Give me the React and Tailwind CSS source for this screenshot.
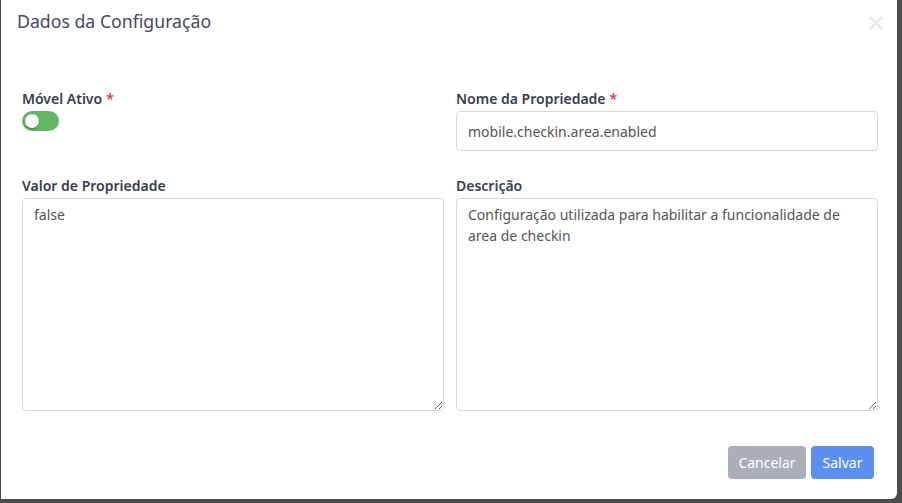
import React, { useState } from "react";

function Toggle() {
  const [on, setOn] = useState(false);
  return (
    <button
      type="button"
      onClick={() => setOn(!on)}
      className="relative w-[37px] h-[20px] rounded-full bg-[#62b762] flex items-center px-[3px]"
    >
      <span
        className={
          "block w-[14px] h-[14px] rounded-full bg-white shadow-[0_1px_2px_rgba(0,0,0,0.35)] transition-transform " +
          (on ? "translate-x-[17px]" : "translate-x-0")
        }
      />
    </button>
  );
}

function Label({ children, required }) {
  return (
    <label className="block h-[20px] leading-[20px] text-[14px] font-semibold text-[#363d50] mb-[2px]">
      {children}
      {required && <span className="text-[#d9383a] ml-[4px]">*</span>}
    </label>
  );
}

export default function App() {
  const [nome, setNome] = useState("mobile.checkin.area.enabled");
  const [valor, setValor] = useState("false");
  const [descricao, setDescricao] = useState(
    "Configuração utilizada para habilitar a funcionalidade de area de checkin"
  );

  return (
    <div
      className="w-[902px] h-[503px] overflow-hidden bg-[#4b4b4b]"
      style={{ fontFamily: '"Noto Sans", "Open Sans", sans-serif' }}
    >
      <div className="ml-[1px] w-[896px] h-[499px] bg-white rounded-br-[6px] flex flex-col">
        <div className="flex items-start justify-between pl-[16px] pr-[13px] pt-[9px]">
          <h4 className="text-[17.7px] leading-[24px] text-[#46476a]">
            Dados da Configuração
          </h4>
          <button className="mt-[6px] text-[#e3e3e3]">
            <svg width="16" height="16" viewBox="0 0 16 16" fill="none" stroke="currentColor" strokeWidth="1.8">
              <path d="M2 2 L14 14 M14 2 L2 14" />
            </svg>
          </button>
        </div>

        <div className="grid grid-cols-[422px_422px] gap-x-[12px] pl-[21px] mt-[56px]">
          <div>
            <Label required>Móvel Ativo</Label>
            <Toggle />
          </div>
          <div>
            <Label required>Nome da Propriedade</Label>
            <input
              value={nome}
              onChange={(e) => setNome(e.target.value)}
              className="w-full h-[40px] border border-[#d3d8e2] rounded-[4px] px-[11px] text-[14px] text-[#555] outline-none"
            />
          </div>

          <div className="mt-[25px]">
            <Label>Valor de Propriedade</Label>
            <textarea
              value={valor}
              onChange={(e) => setValor(e.target.value)}
              className="block w-full h-[213px] border border-[#d3d8e2] rounded-[4px] px-[11px] py-[5px] text-[14px] leading-[21px] text-[#555] outline-none resize-y"
            />
          </div>
          <div className="mt-[25px]">
            <Label>Descrição</Label>
            <textarea
              value={descricao}
              onChange={(e) => setDescricao(e.target.value)}
              className="block w-full h-[213px] border border-[#d3d8e2] rounded-[4px] px-[11px] py-[5px] text-[14px] leading-[21px] text-[#555] outline-none resize-y"
            />
          </div>
        </div>

        <div className="flex justify-end gap-[5px] pr-[23px] mt-[35px]">
          <button className="h-[33px] w-[78px] rounded-[4px] bg-[#a9aeb7] text-white text-[14px]">
            Cancelar
          </button>
          <button className="h-[33px] w-[63px] rounded-[4px] bg-[#5b90f1] text-white text-[14px]">
            Salvar
          </button>
        </div>
      </div>
    </div>
  );
}
